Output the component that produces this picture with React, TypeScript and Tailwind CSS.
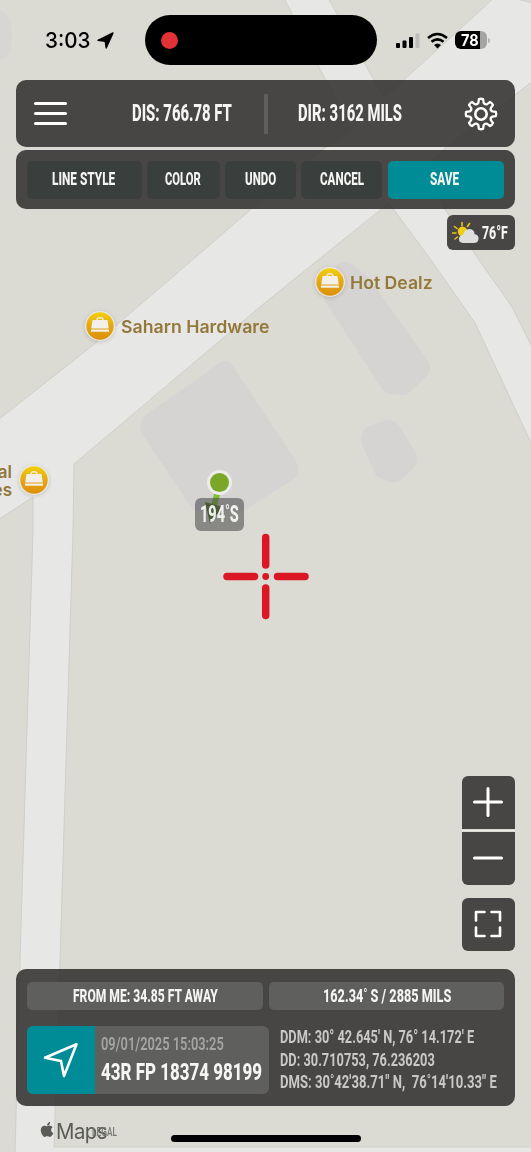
import { useLayoutEffect, useRef, useState, type ReactNode } from "react";
import { FaApple } from "react-icons/fa";

/** Single-line text condensed horizontally so that it fills a given width. */
function Condensed({ width, className = "", children }: { width: number; className?: string; children: ReactNode }) {
  const ref = useRef<HTMLSpanElement>(null);
  const [scale, setScale] = useState(0.65);
  useLayoutEffect(() => {
    if (ref.current) setScale(width / ref.current.offsetWidth);
  }, [width, children]);
  return (
    <span className={`block shrink-0 whitespace-nowrap leading-none ${className}`} style={{ width }}>
      <span ref={ref} className="inline-block origin-left" style={{ transform: `scaleX(${scale})` }}>
        {children}
      </span>
    </span>
  );
}

function MapCanvas() {
  const building = { fill: "#d6d3d3", stroke: "#d6d3d3", strokeLinejoin: "round" as const };
  return (
    <svg className="absolute inset-0" width="531" height="1152" viewBox="0 0 531 1152">
      <rect width="531" height="1152" fill="#e7e7e6" />
      <g fill="#dbdbd3" stroke="#cfcfca" strokeWidth="1">
        <path d="M-2-2H284L351 130 322 150 250 210 204 250 92 346 -2 420Z" />
        <path d="M328-2H494L384 98Z" />
        <path d="M512-2H533V3Z" />
        <path d="M533 81L443 150 426 167 444 208 479 260 512 307 533 349Z" />
        <path d="M389 203L431 260 475 323 533 447V1147H54L60 960 73 530 74 464 261 306 318 260Z" />
        <path d="M-2 520L33 497 33 530 20 960 15 1154H-2Z" />
      </g>
      <path {...building} strokeWidth="16" d="M225 369L289 465Q292 471 287 474L241 503 198 503 149 430Q147 424 154 419Z" />
      <path {...building} strokeWidth="24" d="M345 274L360 286 418 368 402 383 392 382 336 296Z" />
      <path {...building} strokeWidth="28" d="M375 439L388 434 403 459 393 468 387 466Z" />
      <path d="M0 10Q12 14 12 36T0 60Z" fill="#d8d6d3" />
      <path d="M220 483L214 506" stroke="#82bd35" strokeWidth="6" />
      <path d="M205 502L223 507 210 523Z" fill="#4f772a" />
      <circle cx="219.500" cy="482.500" r="12.500" fill="#ececea" />
      <circle cx="219.500" cy="482.500" r="9.500" fill="#7ba729" />
      <g stroke="#dc1725" strokeWidth="7.500" strokeLinecap="round">
        <path d="M265.700 537.500V565M265.700 588V615.500M227 576.500H254.500M277.500 576.500H305" />
      </g>
      <circle cx="265.700" cy="576.500" r="3.400" fill="#dc1725" />
    </svg>
  );
}

function ShopPin() {
  return (
    <svg className="shrink-0 overflow-visible drop-shadow-sm" width="30" height="30" viewBox="0 0 30 30">
      <defs>
        <linearGradient id="pin" x1="0" y1="0" x2="0" y2="1">
          <stop offset="0" stopColor="#f2d00a" />
          <stop offset=".5" stopColor="#e5a616" />
          <stop offset="1" stopColor="#db910b" />
        </linearGradient>
      </defs>
      <circle cx="15" cy="15" r="15" fill="#e9e8e3" />
      <circle cx="15" cy="15" r="13.700" fill="url(#pin)" />
      <path d="M12 10V8.800Q12 6.800 15 6.800T18 8.800V10" fill="none" stroke="#f5f0df" strokeWidth="1.400" />
      <path d="M7.500 9H22.500L23.800 17.500H6.200Z" fill="#f2f0e8" />
      <rect x="6" y="18.400" width="18" height="2.400" rx=".5" fill="#f2f0e8" />
    </svg>
  );
}

function Gear() {
  const point = (r: number, deg: number) => {
    const a = (deg * Math.PI) / 180;
    return `${(17 + r * Math.sin(a)).toFixed(2)} ${(17 - r * Math.cos(a)).toFixed(2)}`;
  };
  const d = Array.from({ length: 8 }, (_, i) => {
    const a = i * 45;
    return `${i ? "L" : "M"}${point(11.6, a - 13)}L${point(15, a - 8)}Q${point(15.6, a)} ${point(15, a + 8)}L${point(11.6, a + 13)}Q${point(9.8, a + 22.5)} ${point(11.6, a + 32)}`;
  }).join("");
  return (
    <svg width="34" height="34" viewBox="0 0 34 34" fill="none" stroke="#fff" strokeWidth="2.300" strokeLinejoin="round">
      <path d={d + "Z"} />
      <circle cx="17" cy="17" r="5.700" strokeWidth="2.600" />
    </svg>
  );
}

const panel = "bg-[#2a2827]/83";

function StatusBar() {
  return (
    <div className="relative flex h-[80px] shrink-0 items-center text-black">
      <div className="flex w-[145px] items-center gap-[7px] pl-[45px]">
        <Condensed width={45} className="font-['Inter'] text-[22px] font-medium">3:03</Condensed>
        <svg width="17" height="17" viewBox="0 0 17 17" stroke="#000" strokeWidth="1.400" strokeLinejoin="round"><path d="M1 8.300L16 1 9.200 16 8.200 9.200Z" /></svg>
      </div>
      <div className="flex h-[50px] w-[232px] items-center rounded-full bg-black pl-[16px]">
        <span className="h-[17px] w-[17px] rounded-full bg-[#e23235]" />
      </div>
      <div className="flex items-center gap-[7px] pl-[18px]">
        <svg width="25" height="17" viewBox="0 0 25 17">
          <rect x="1" y="11" width="4" height="5" rx="1" />
          <rect x="7.500" y="8.500" width="4" height="7.500" rx="1" />
          <rect x="14" y="5" width="4" height="11" rx="1" />
          <rect x="20.500" y="1.500" width="4" height="14.500" rx="1" fill="#bdbdb9" />
        </svg>
        <svg width="21" height="17" viewBox="0 0 21 17" fill="none" stroke="#000" strokeWidth="2.600">
          <path d="M1 6Q10.500-2 20 6M4.500 9.800Q10.500 4.800 16.500 9.800" />
          <path d="M7 13Q10.500 10 14 13L10.500 16.500Z" fill="#000" stroke="none" />
        </svg>
        <div className="flex items-center gap-px">
          <div className="flex h-[18px] w-[32px] items-center rounded-[6px] bg-linear-to-r from-black from-78% to-[#a4a4a3] to-78% pl-[6px] font-['Inter'] text-[16px] font-bold text-white">
            <Condensed width={18}>78</Condensed>
          </div>
          <span className="h-[5px] w-[2px] rounded-r-full bg-[#b5b5b4]" />
        </div>
      </div>
    </div>
  );
}

function ToolButton({ label, textWidth, className }: { label: string; textWidth: number; className: string }) {
  return (
    <button className={`flex h-[38px] items-center justify-center rounded-[5px] pb-[3px] text-[19px] ${className}`}>
      <Condensed width={textWidth}>{label}</Condensed>
    </button>
  );
}

function TopPanels() {
  return (
    <div className="flex shrink-0 flex-col gap-[3px]">
      <header className={`flex h-[67px] items-center rounded-[10px] pr-[17px] pl-[18px] text-[23.500px] ${panel}`}>
        <button aria-label="Menu" className="flex w-[33px] flex-col gap-[7px]">
          <span className="h-[3px] rounded-full bg-white" />
          <span className="h-[3px] rounded-full bg-white" />
          <span className="h-[3px] rounded-full bg-white" />
        </button>
        <Condensed width={100} className="ml-[65px]">DIS: 766.78 FT</Condensed>
        <span className="ml-[32px] h-[40px] w-[4px] bg-[#5f5e5d]" />
        <Condensed width={104} className="ml-[30px]">DIR: 3162 MILS</Condensed>
        <button aria-label="Settings" className="ml-auto"><Gear /></button>
      </header>
      <div className={`flex h-[59px] items-center rounded-[10px] px-[11px] ${panel}`}>
        <ToolButton label="LINE STYLE" textWidth={63} className="w-[115px] bg-[#3a3e3c] pr-[2px]" />
        <ToolButton label="COLOR" textWidth={36} className="ml-[5px] w-[73px] bg-[#3a3e3c]" />
        <ToolButton label="UNDO" textWidth={31} className="ml-[5px] w-[72px] bg-[#3a3e3c]" />
        <ToolButton label="CANCEL" textWidth={44} className="ml-[5px] w-[81px] bg-[#3a3e3c]" />
        <ToolButton label="SAVE" textWidth={29} className="ml-[6px] w-[116px] bg-[#008c97] pr-[3px]" />
      </div>
    </div>
  );
}

function Weather() {
  return (
    <div className={`mt-[6px] flex h-[35px] w-[68px] shrink-0 items-center gap-[3px] self-end rounded-[6px] pb-px pl-[5px] text-[19px] ${panel}`}>
      <svg width="27" height="23" viewBox="0 0 27 23">
        <path d="M2.500 5.500L5 7.500M10 1.500V5M17.500 2.500L15.500 5.500M.500 12H4M3 18L5.500 16" stroke="#e8c51c" strokeWidth="1.600" strokeLinecap="round" />
        <circle cx="10.500" cy="10.500" r="4.800" fill="#efcf14" />
        <path d="M11 22Q6.500 21.500 7 17.500 7.500 14 11 14 12.500 8 17.500 8 22.500 8.500 22.500 13 27 14 26.500 18 26 22 22 22Z" fill="#dedede" />
      </svg>
      <Condensed width={26}>76°F</Condensed>
    </div>
  );
}

function ZoomControls() {
  const stroke = { fill: "none", stroke: "#fff", strokeWidth: 3, strokeLinecap: "round" as const, strokeLinejoin: "round" as const };
  return (
    <div className="mt-auto flex w-[53.500px] shrink-0 flex-col self-end">
      <button aria-label="Zoom in" className={`flex h-[53px] items-center justify-center rounded-t-[6px] ${panel}`}>
        <svg width="32" height="32" viewBox="0 0 32 32" {...stroke}><path d="M2.500 16H29.500M16 2.500V29.500" /></svg>
      </button>
      <span className="my-px h-px bg-[#e9e9e5]" />
      <button aria-label="Zoom out" className={`flex h-[53px] items-center justify-center rounded-b-[6px] ${panel}`}>
        <svg width="32" height="32" viewBox="0 0 32 32" {...stroke}><path d="M2.500 16H29.500" /></svg>
      </button>
      <button aria-label="Full screen" className={`mt-[13px] flex h-[53px] items-center justify-center rounded-[6px] ${panel}`}>
        <svg width="28" height="28" viewBox="0 0 28 28" {...stroke} strokeWidth={2.6}>
          <path d="M2 10.500V2H10.500M17.500 2H26V10.500M26 17.500V26H17.500M10.500 26H2V17.500" />
        </svg>
      </button>
    </div>
  );
}

function PositionPanel() {
  return (
    <section className={`mt-[18px] flex h-[137.500px] shrink-0 flex-col rounded-[10px] px-[11px] pt-[13.500px] ${panel}`}>
      <div className="flex gap-[6px] text-[18.500px]">
        <div className="flex h-[28px] w-[236px] items-center justify-center rounded-[5px] bg-[#5f5f5e]">
          <Condensed width={145}>FROM ME: 34.85 FT AWAY</Condensed>
        </div>
        <div className="flex h-[28px] w-[235px] items-center justify-center rounded-[5px] bg-[#5f5f5e]">
          <Condensed width={128}>162.34˚ S / 2885 MILS</Condensed>
        </div>
      </div>
      <div className="mt-[16px] flex">
        <div className="flex h-[68px] w-[242px] overflow-hidden rounded-[6px] bg-[#5f5f5e]">
          <div className="flex w-[68px] items-center justify-center bg-[#008c97]">
            <svg width="36" height="36" viewBox="0 0 36 36" fill="none" stroke="#fff" strokeWidth="2.600" strokeLinejoin="round">
              <path d="M2 15.800L33.500 2.300 21 34 18 19Z" />
            </svg>
          </div>
          <div className="flex flex-col pt-[9px] pl-[6px]">
            <Condensed width={123} className="text-[18.500px] font-semibold text-[#a5a5a4]">09/01/2025 15:03:25</Condensed>
            <Condensed width={161} className="mt-[6px] text-[24.500px]">43R FP 18374 98199</Condensed>
          </div>
        </div>
        <div className="ml-[11px] flex flex-col gap-[3.500px] pt-px text-[19px] font-bold text-[#c9c8c6]">
          <Condensed width={194}>DDM: 30° 42.645' N, 76° 14.172' E</Condensed>
          <Condensed width={155}>DD: 30.710753, 76.236203</Condensed>
          <Condensed width={217}>DMS: 30˚42'38.71" N,&nbsp; 76˚14'10.33" E</Condensed>
        </div>
      </div>
    </section>
  );
}

function PlaceLabels() {
  return (
    <div className="absolute inset-0 overflow-hidden font-['Inter'] text-[17px] leading-[18px] font-semibold text-[#94783a]">
      <div className="absolute top-[311px] left-[85px] flex items-center gap-[6px]">
        <ShopPin />
        <Condensed width={148} className="pt-[2px]">Saharn Hardware</Condensed>
      </div>
      <div className="absolute top-[267px] left-[315px] flex items-center gap-[5px]">
        <ShopPin />
        <Condensed width={83} className="pt-[2px]">Hot Dealz</Condensed>
      </div>
      <div className="absolute top-[463px] right-[482px] flex items-center gap-[7px]">
        <div className="text-right">al<br />es</div>
        <div className="mt-[-2px]"><ShopPin /></div>
      </div>
      <div className="absolute top-[498px] left-[195px] flex h-[33px] w-[49px] items-center justify-center rounded-[6px] bg-[#444444]/55 font-['Roboto'] text-[23px] font-extrabold text-[#f0f0ee]">
        <Condensed width={39}>194˚S</Condensed>
      </div>
    </div>
  );
}

export default function App() {
  return (
    <main className="relative h-[1152px] w-[531px] overflow-hidden font-['Roboto',sans-serif] font-extrabold text-[#f5f5f4]">
      <MapCanvas />
      <PlaceLabels />
      <div className="relative flex h-full flex-col pr-[16px] pl-[16px]">
        <div className="-mx-[16px]"><StatusBar /></div>
        <TopPanels />
        <Weather />
        <ZoomControls />
        <PositionPanel />
        <footer className="relative flex h-[46px] shrink-0 items-start pt-[14px] pl-[24px] text-[#5b5b58]">
          <FaApple className="mt-px h-[17px] w-[14px]" />
          <Condensed width={51} className="ml-[2px] font-['Inter'] text-[22px] font-normal tracking-tight">Maps</Condensed>
          <a className="absolute top-[20px] left-[76px] text-[12px] text-[#777774] underline">
            <Condensed width={25} className="font-medium underline">LEGAL</Condensed>
          </a>
          <span className="absolute top-[29px] left-[155px] h-[7px] w-[190px] rounded-full bg-black" />
        </footer>
      </div>
    </main>
  );
}
